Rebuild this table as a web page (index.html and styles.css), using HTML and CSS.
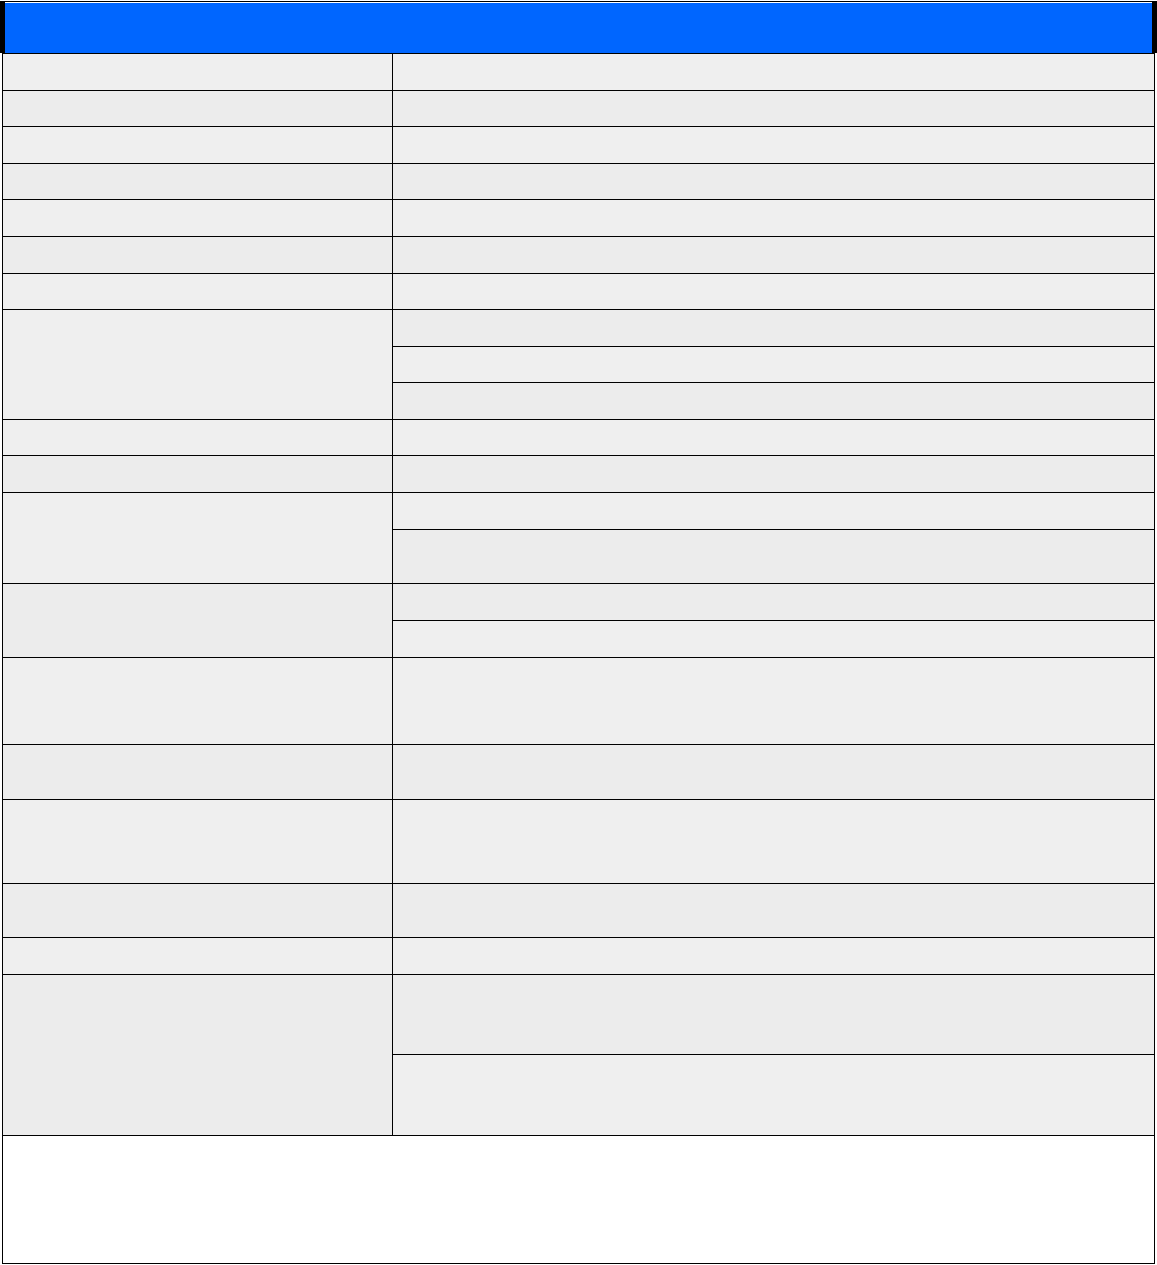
FILE: index.html
```html
<!DOCTYPE html>
<html lang="en">
<head>
  <meta charset="UTF-8">
  <title>Record Sheet</title>
  <meta name="viewport" content="width=device-width, initial-scale=1.0">
  <link rel="stylesheet" href="styles.css">
</head>
<body>

<!-- Title bar -->
<header class="banner">
  <div class="banner-rule"></div>
  <div class="banner-bar"></div>
</header>

<!-- Details grid -->
<div class="sheet">
  <div class="cell label r1"></div><div class="cell value r1"></div>
  <div class="cell label r2 alt"></div><div class="cell value r2 alt"></div>
  <div class="cell label r3"></div><div class="cell value r3"></div>
  <div class="cell label r4 alt"></div><div class="cell value r4 alt"></div>
  <div class="cell label r5"></div><div class="cell value r5"></div>
  <div class="cell label r6 alt"></div><div class="cell value r6 alt"></div>
  <div class="cell label r7"></div><div class="cell value r7"></div>

  <div class="cell label span3 r8"></div>
  <div class="cell value r8 alt"></div>
  <div class="cell value r9"></div>
  <div class="cell value r10 alt"></div>

  <div class="cell label r11"></div><div class="cell value r11"></div>
  <div class="cell label r12 alt"></div><div class="cell value r12 alt"></div>

  <div class="cell label span2 r13"></div>
  <div class="cell value r13"></div>
  <div class="cell value r14 alt"></div>

  <div class="cell label span2 r15 alt"></div>
  <div class="cell value r15 alt"></div>
  <div class="cell value r16"></div>

  <div class="cell label r17"></div><div class="cell value r17"></div>
  <div class="cell label r18 alt"></div><div class="cell value r18 alt"></div>
  <div class="cell label r19"></div><div class="cell value r19"></div>
  <div class="cell label r20 alt"></div><div class="cell value r20 alt"></div>
  <div class="cell label r21"></div><div class="cell value r21"></div>

  <div class="cell label span2 r22 alt"></div>
  <div class="cell value r22 alt"></div>
  <div class="cell value r23"></div>

  <div class="cell notes r24"></div>
</div>

</body>
</html>
```

FILE: styles.css
```css
body {
  font-family: 'Liberation Sans', Arial, sans-serif;
  margin: 0;
  padding: 0;
  background: #ffffff;
}

.banner {
  margin-top: 1px;
  border-left: 5px solid #000;
  border-right: 5px solid #000;
}

.banner-rule {
  height: 1px;
  background: #000;
}

.banner-bar {
  height: 50px;
  margin-top: 1px;
  background: #0066ff;
}

.sheet {
  display: grid;
  grid-template-columns: 389px 761px;
  grid-template-rows:
    36px 35px 36px 35px 36px 36px 35px
    36px 35px 36px
    35px 36px
    36px 53px
    36px 36px
    86px 54px 83px 53px 36px
    79px 80px
    127px;
  gap: 1px;
  width: 1151px;
  margin-left: 2px;
  padding: 1px;
  background: #000;
}

.cell {
  background: #efefef;
}

.cell.alt {
  background: #ececec;
}

.label { grid-column: 1; }
.value { grid-column: 2; }

.span2 { grid-row-end: span 2; }
.span3 { grid-row-end: span 3; }

.notes {
  grid-column: 1 / span 2;
  background: #ffffff;
}

.r1 { grid-row-start: 1; }
.r2 { grid-row-start: 2; }
.r3 { grid-row-start: 3; }
.r4 { grid-row-start: 4; }
.r5 { grid-row-start: 5; }
.r6 { grid-row-start: 6; }
.r7 { grid-row-start: 7; }
.r8 { grid-row-start: 8; }
.r9 { grid-row-start: 9; }
.r10 { grid-row-start: 10; }
.r11 { grid-row-start: 11; }
.r12 { grid-row-start: 12; }
.r13 { grid-row-start: 13; }
.r14 { grid-row-start: 14; }
.r15 { grid-row-start: 15; }
.r16 { grid-row-start: 16; }
.r17 { grid-row-start: 17; }
.r18 { grid-row-start: 18; }
.r19 { grid-row-start: 19; }
.r20 { grid-row-start: 20; }
.r21 { grid-row-start: 21; }
.r22 { grid-row-start: 22; }
.r23 { grid-row-start: 23; }
.r24 { grid-row-start: 24; }
```
